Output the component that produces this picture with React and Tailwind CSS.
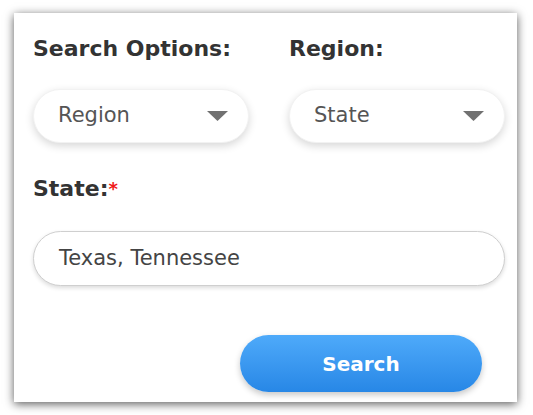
export default function App() {
  const font = { fontFamily: '"DejaVu Sans", Inter, sans-serif' }

  const Caret = () => (
    <svg width="21" height="10" viewBox="0 0 21 10" className="shrink-0">
      <path d="M0 0 L21 0 L10.5 10 Z" fill="#717171" />
    </svg>
  )

  const Select = ({ value }) => (
    <div className="flex items-center justify-between h-[54px] rounded-full bg-white pl-[24px] pr-[20px] border border-[#f2f2f2] shadow-[0_3px_8px_rgba(0,0,0,0.16)]">
      <span className="text-[21px] text-[#555]">{value}</span>
      <Caret />
    </div>
  )

  return (
    <div className="w-[533px] h-[415px] bg-white pt-[13px] pl-[14px]" style={font}>
      <div className="w-[503px] h-[389px] bg-white pt-[22px] pl-[19px] pr-[12px] shadow-[0_2px_9px_rgba(0,0,0,0.65)]">
        <div className="grid grid-cols-2 gap-x-10">
          <div>
            <div className="text-[22px] leading-[28px] font-bold text-[#333]">Search Options:</div>
            <div className="mt-[26px]">
              <Select value="Region" />
            </div>
          </div>
          <div>
            <div className="text-[22px] leading-[28px] font-bold text-[#333]">Region:</div>
            <div className="mt-[26px]">
              <Select value="State" />
            </div>
          </div>
        </div>

        <div className="mt-[32px] text-[22px] leading-[28px] font-bold text-[#333]">
          State:<span className="text-[#f01818] text-[18px] align-top">*</span>
        </div>

        <div className="mt-[28px] h-[55px] flex items-center rounded-full bg-white border border-[#cfcfcf] pl-[25px] shadow-[0_2px_4px_rgba(0,0,0,0.14)]">
          <span className="text-[21px] text-[#444]">Texas, Tennessee</span>
        </div>

        <div className="flex justify-end pr-[23px] mt-[49px]">
          <button className="w-[242px] h-[57px] rounded-full bg-gradient-to-b from-[#4eaafa] to-[#2787e6] text-white text-[20px] font-bold shadow-[0_3px_6px_rgba(0,0,0,0.22)]">
            Search
          </button>
        </div>
      </div>
    </div>
  )
}
